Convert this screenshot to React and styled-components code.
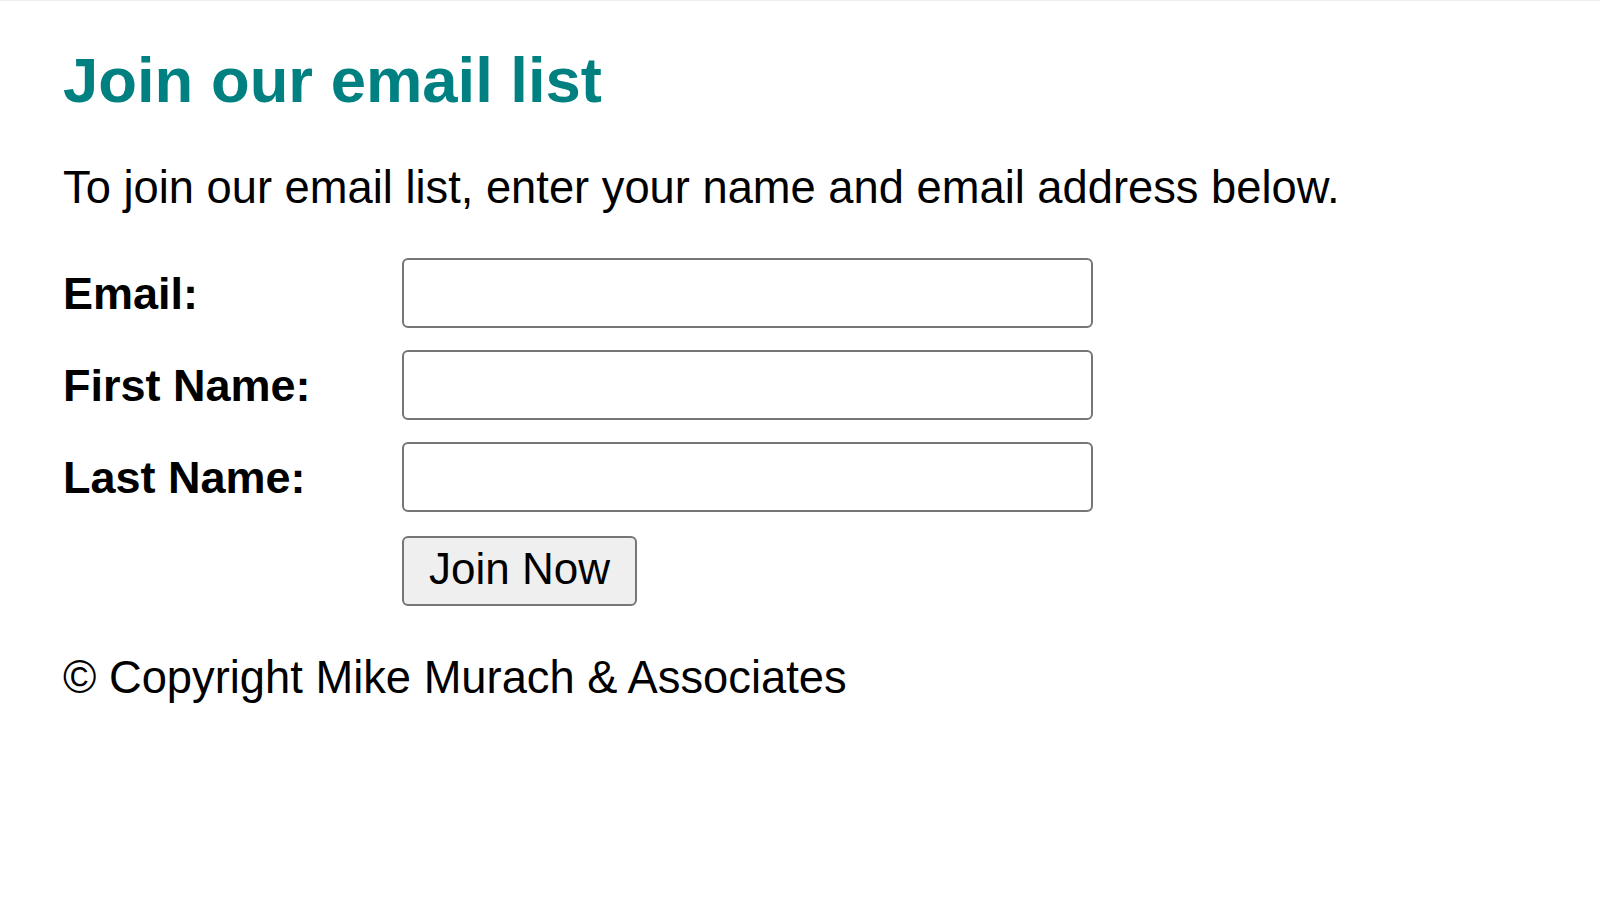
import React from "react";
import styled, { createGlobalStyle } from "styled-components";

const GlobalStyle = createGlobalStyle`
  html, body {
    margin: 0;
    padding: 0;
    background: #ffffff;
  }
  body {
    font-family: Arial, "Liberation Sans", Helvetica, sans-serif;
    color: #000000;
  }
`;

const Page = styled.div`
  min-height: 899px;
  box-sizing: border-box;
  border-top: 1px solid #eeeeee;
  padding: 0 0 0 63px;
  display: flex;
  flex-direction: column;
  align-items: flex-start;
`;

const Heading = styled.h1`
  margin: 42px 0 0 0;
  font-size: 63.4px;
  line-height: 74px;
  font-weight: bold;
  color: #008080;
`;

const Text = styled.p`
  margin: ${(p) => p.$top || 0}px 0 0 0;
  font-size: 45.3px;
  line-height: 52px;
`;

const Form = styled.form`
  margin-top: 44px;
  display: grid;
  grid-template-columns: 339px 691px;
  row-gap: 22px;
  align-items: center;
`;

const Label = styled.label`
  font-size: 45px;
  line-height: 52px;
  font-weight: bold;
  padding-top: 2px;
`;

const Field = styled.input`
  box-sizing: border-box;
  width: 691px;
  height: 70px;
  margin: 0;
  padding: 3px 6px;
  border: 2px solid #767676;
  border-radius: 6px;
  background: #ffffff;
  font-family: inherit;
  font-size: 44px;
  outline: none;
`;

const Button = styled.button`
  grid-column: 2;
  justify-self: start;
  box-sizing: border-box;
  width: 235px;
  height: 70px;
  margin-top: 2px;
  padding: 0 0 4px 0;
  border: 2px solid #767676;
  border-radius: 6px;
  background: #efefef;
  color: #000000;
  font-family: Arial, "Liberation Sans", Helvetica, sans-serif;
  font-size: 44px;
  line-height: 52px;
`;

const fields = [
  { id: "email", label: "Email:", type: "email" },
  { id: "firstName", label: "First Name:", type: "text" },
  { id: "lastName", label: "Last Name:", type: "text" },
];

export default function App() {
  return (
    <>
      <GlobalStyle />
      <Page>
        <Heading>Join our email list</Heading>
        <Text $top={45}>
          To join our email list, enter your name and email address below.
        </Text>
        <Form onSubmit={(e) => e.preventDefault()}>
          {fields.map((f) => (
            <React.Fragment key={f.id}>
              <Label htmlFor={f.id}>{f.label}</Label>
              <Field id={f.id} name={f.id} type={f.type} />
            </React.Fragment>
          ))}
          <Button type="submit">Join Now</Button>
        </Form>
        <Text $top={46}>© Copyright Mike Murach &amp; Associates</Text>
      </Page>
    </>
  );
}
